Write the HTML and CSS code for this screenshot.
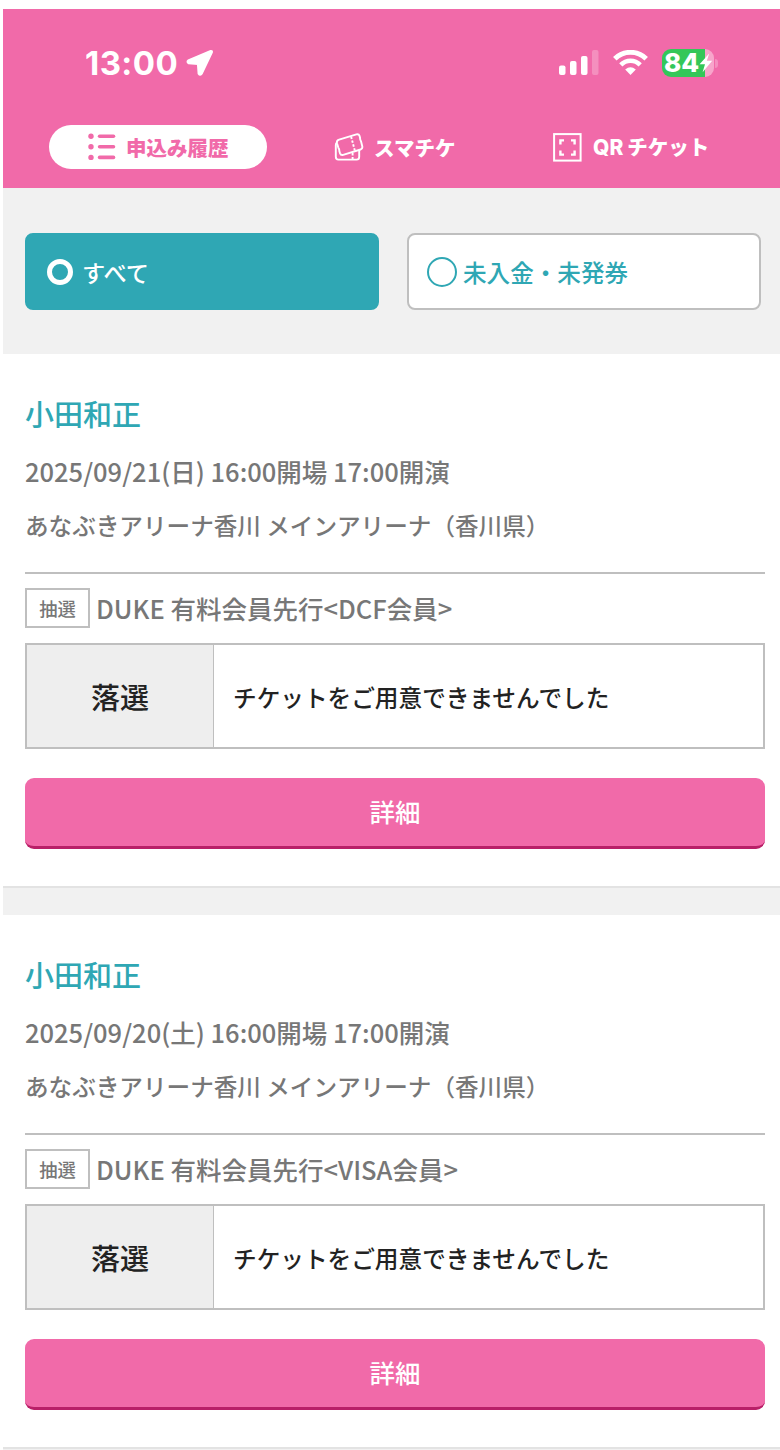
FILE: index.html
```html
<!DOCTYPE html>
<html lang="ja">
<head>
    <meta charset="UTF-8">
    <meta name="viewport" content="width=device-width, initial-scale=1.0">
    <title>申込み履歴</title>
    <link rel="stylesheet" href="styles.css">
</head>
<body>
    <header class="header">
        <div class="status">
            <div class="clock">
                <span class="time">13:00</span>
                <svg width="28" height="28" viewBox="0 0 28 28"><path d="M24.8 2 2.3 11.6Q.8 12.8 2.6 14.2L12 15 12.7 24.6Q14.2 26.8 15.8 24.4L25.8 3.4Q26.2 1.8 24.8 2Z" fill="#fff" stroke="#fff" stroke-width="2.2" stroke-linejoin="round"/></svg>
            </div>
            <div class="indicators">
                <svg class="signal" width="40" height="26" viewBox="0 0 40 26" fill="#fff">
                    <rect x="0" y="15.5" width="6.5" height="9.5" rx="2"/>
                    <rect x="11" y="11" width="6.5" height="14" rx="2"/>
                    <rect x="22" y="6" width="6.5" height="19" rx="2"/>
                    <rect x="33" y="0" width="6.5" height="25" rx="2" opacity=".25"/>
                </svg>
                <svg class="wifi" width="35" height="26" viewBox="0 0 35 26">
                    <path d="M1.8 8.7C10.6.2 24.4.2 33.2 8.7" fill="none" stroke="#fff" stroke-width="5"/>
                    <path d="M7.8 14.9C13.3 9.4 21.7 9.4 27.2 14.9" fill="none" stroke="#fff" stroke-width="4.6"/>
                    <path d="M12.2 19.6Q17.5 15 22.8 19.6L17.5 25Z" fill="#fff"/>
                </svg>
                <div class="battery">
                    <span class="level">84</span>
                    <svg class="bolt" width="14" height="20" viewBox="0 0 14 20"><path d="M10.2.6.6 11.2H6L3.6 19.2 13.2 7.8H7.8Z" fill="#fff"/></svg>
                </div>
                <span class="battery-cap"></span>
            </div>
        </div>
        <nav class="tabs">
            <a class="tab active">
                <svg width="28" height="28" viewBox="0 0 28 28" fill="#f16aa9">
                    <circle cx="3" cy="3.2" r="2.7"/><circle cx="3" cy="13.8" r="2.7"/><circle cx="3" cy="24.4" r="2.7"/>
                    <rect x="9.8" y="1.4" width="17.5" height="3.6" rx="1.8"/>
                    <rect x="9.8" y="12" width="17.5" height="3.6" rx="1.8"/>
                    <rect x="9.8" y="22.6" width="17.5" height="3.6" rx="1.8"/>
                </svg>
                <span>申込み履歴</span>
            </a>
            <a class="tab tab-ticket">
                <svg width="30" height="28" viewBox="0 0 30 28" fill="none" stroke="#fff" stroke-width="1.9" stroke-linejoin="round">
                    <path d="M5.1 6.7 22.4 1.3Q24.8.7 25.5 2.8L26.1 5.1Q25.9 6.7 27 8.2L28.2 12.9Q28.9 15.7 26.5 16.5L9.2 21.8Q6.8 22.4 6 20.3L5.3 18Q5.5 16.2 4.4 14.8L3 10.2Q2.4 7.5 5.1 6.7Z"/>
                    <path d="M3 9.6Q1.8 10.3 1.8 12V23.8Q1.8 26.6 4.4 26.6H22.6Q25.2 26.6 25.2 24V17"/>
                    <path d="M17.1 3.6 21 18.2M18.6 20V26.2" stroke-dasharray="2.4 1.6"/>
                </svg>
                <span>スマチケ</span>
            </a>
            <a class="tab tab-qr">
                <svg width="29" height="29" viewBox="0 0 29 29" fill="none" stroke="#fff">
                    <rect x="1.1" y="1.1" width="26.5" height="26.5" stroke-width="2"/>
                    <path d="M7.4 11.4V7.4H11M18 7.4H21.6V11.4M21.6 17.6V21.6H18M11 21.6H7.4V17.6" stroke-width="2.4"/>
                </svg>
                <span><span class="qr">QR</span>チケット</span>
            </a>
        </nav>
    </header>

    <section class="filter">
        <div class="filter-button selected"><i class="radio"></i><span>すべて</span></div>
        <div class="filter-button"><i class="radio"></i><span>未入金・未発券</span></div>
    </section>

    <main>
        <article class="entry">
            <h2 class="artist">小田和正</h2>
            <p class="date">2025/09/21(日) 16:00開場 17:00開演</p>
            <p class="venue">あなぶきアリーナ香川 メインアリーナ（香川県）</p>
            <div class="reception">
                <span class="label">抽選</span>
                <span>DUKE 有料会員先行&lt;DCF会員&gt;</span>
            </div>
            <div class="result">
                <div class="result-status">落選</div>
                <div class="result-text">チケットをご用意できませんでした</div>
            </div>
            <button class="detail">詳細</button>
        </article>
        <article class="entry">
            <h2 class="artist">小田和正</h2>
            <p class="date">2025/09/20(土) 16:00開場 17:00開演</p>
            <p class="venue">あなぶきアリーナ香川 メインアリーナ（香川県）</p>
            <div class="reception">
                <span class="label">抽選</span>
                <span>DUKE 有料会員先行&lt;VISA会員&gt;</span>
            </div>
            <div class="result">
                <div class="result-status">落選</div>
                <div class="result-text">チケットをご用意できませんでした</div>
            </div>
            <button class="detail">詳細</button>
        </article>
    </main>
</body>
</html>
```
FILE: styles.css
```css
* {
    box-sizing: border-box;
}
html {
    overflow: hidden;
}
body {
    margin: 0;
    padding: 9px 0 0 3px;
    height: 1450px;
    overflow: hidden;
    background: #fff;
    color: #777;
    font-family: "Noto Sans CJK JP", sans-serif;
    font-weight: 500;
}
h2, p {
    margin: 0;
    font-weight: 500;
    white-space: nowrap;
}
svg {
    display: block;
    flex: none;
}
.header {
    height: 179px;
    background: #f16aa9;
    color: #fff;
}
.status {
    display: flex;
    justify-content: space-between;
    padding: 34px 62px 0 82px;
    height: 116px;
}
.clock, .indicators {
    display: flex;
    align-items: center;
    height: 40px;
}
.clock {
    gap: 8px;
}
.time {
    font: 700 33px/40px Inter, sans-serif;
    letter-spacing: 0.4px;
}
.wifi {
    margin: 0 14px 0 14px;
}
.battery {
    display: flex;
    align-items: center;
    width: 52px;
    height: 28px;
    padding-left: 2px;
    border-radius: 9px;
    background: linear-gradient(to right, #34c759 43px, #f7a5cb 43px);
}
.level {
    width: 35px;
    font: 800 26px/28px Inter, sans-serif;
}
.battery-cap {
    width: 3px;
    height: 9px;
    margin-left: 1px;
    border-radius: 0 4px 4px 0;
    background: #f58fbf;
}
.tabs {
    display: flex;
    padding-left: 46px;
}
.tab {
    display: flex;
    align-items: center;
    width: 218px;
    height: 44px;
    gap: 10px;
    font-size: 20.5px;
    font-weight: 900;
    line-height: 42px;
    white-space: nowrap;
}
.active {
    padding-left: 39px;
    border-radius: 22px;
    background: #fff;
    color: #f16aa9;
}
.tab-ticket {
    margin-left: 67px;
}
.tab-qr {
    margin-left: 1px;
    gap: 11px;
}
.qr {
    margin-right: 4px;
    font-family: Inter, sans-serif;
    font-size: 21px;
    font-weight: 800;
}
.filter {
    display: flex;
    gap: 28px;
    height: 166px;
    padding: 45px 19px 0 22px;
    background: #f1f1f1;
}
.filter-button {
    display: flex;
    align-items: center;
    flex: none;
    width: 354px;
    height: 77px;
    padding: 0 0 0 18px;
    border: 2px solid #bfbfbf;
    border-radius: 8px;
    background: #fff;
    color: #2fa7b4;
    font-size: 23.6px;
    line-height: 36px;
}
.radio {
    width: 30px;
    height: 30px;
    margin-right: 6px;
    border: 2px solid #2fa7b4;
    border-radius: 50%;
}
.selected {
    padding-left: 20px;
    border-color: #2fa7b4;
    background: #2fa7b4;
    color: #fff;
    font-size: 23.2px;
}
.selected .radio {
    width: 26px;
    height: 26px;
    margin-right: 9px;
    border: 5px solid #fff;
}
.entry {
    height: 561px;
    padding: 36px 15px 0 22px;
    background: linear-gradient(#fff 532px, #e3e3e3 532px, #e3e3e3 534px, #f1f1f1 534px);
}
.artist {
    color: #2fa7b4;
    font-size: 29px;
    line-height: 46px;
}
.date {
    margin-top: 8px;
    font-size: 25.5px;
    line-height: 54px;
}
.venue {
    height: 74px;
    font-size: 23.6px;
    line-height: 55px;
}
.reception {
    display: flex;
    gap: 6px;
    height: 71px;
    padding-top: 14px;
    border-top: 2px solid #bfbfbf;
    font-size: 25.5px;
    line-height: 40px;
}
.label {
    width: 65px;
    height: 40px;
    border: 2px solid #bfbfbf;
    font-size: 18.3px;
    line-height: 36px;
    text-align: center;
}
.result {
    display: flex;
    height: 106px;
    border: 2px solid #bfbfbf;
    color: #222;
}
.result-status {
    width: 187px;
    border-right: 1px solid #bfbfbf;
    background: #eee;
    font-size: 29px;
    line-height: 102px;
    text-align: center;
}
.result-text {
    padding-left: 19px;
    font-size: 23.65px;
    line-height: 104px;
}
.detail {
    display: block;
    width: 100%;
    height: 71px;
    margin-top: 29px;
    padding: 0 0 2px;
    border: 0;
    border-bottom: 3px solid #b92068;
    border-radius: 9px;
    background: #f16aa9;
    color: #fff;
    font: 500 25.5px/66px "Noto Sans CJK JP", sans-serif;
}
```
